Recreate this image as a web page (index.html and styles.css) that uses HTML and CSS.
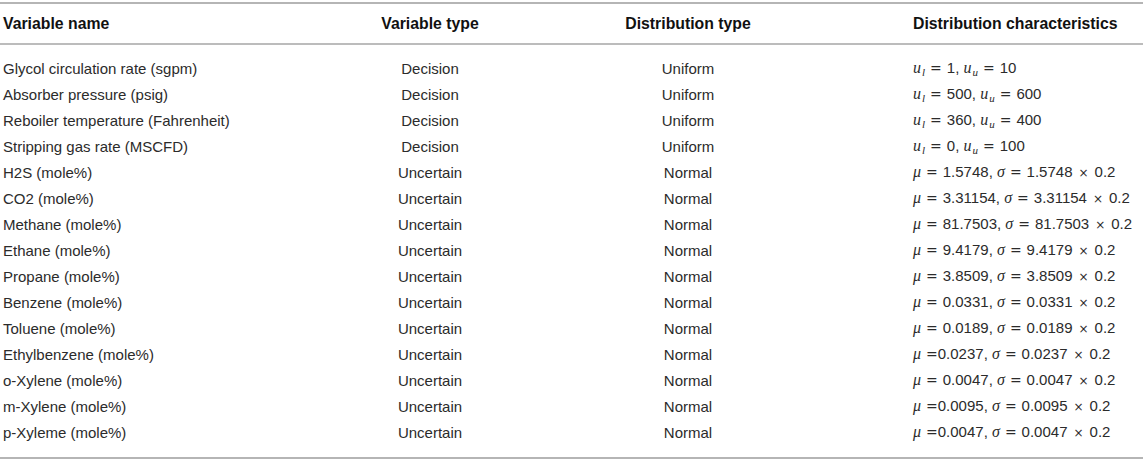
FILE: index.html
```html
<!DOCTYPE html>
<html>
<head>
<meta charset="utf-8">
<link rel="stylesheet" href="styles.css">
</head>
<body>
<table class="data">
  <colgroup>
    <col class="c1"><col class="c2"><col class="c3"><col class="c4">
  </colgroup>
  <thead>
    <tr>
      <th class="left">Variable name</th>
      <th class="mid">Variable type</th>
      <th class="mid">Distribution type</th>
      <th class="left last">Distribution characteristics</th>
    </tr>
  </thead>
  <tbody>
    <tr class="first"><td>Glycol circulation rate (sgpm)</td><td class="mid">Decision</td><td class="mid">Uniform</td><td class="last"><span class="mi">u</span><sub class="mi">l</sub><span class="eq">=</span>1, <span class="mi">u</span><sub class="mi">u</sub><span class="eq">=</span>10</td></tr>
    <tr><td>Absorber pressure (psig)</td><td class="mid">Decision</td><td class="mid">Uniform</td><td class="last"><span class="mi">u</span><sub class="mi">l</sub><span class="eq">=</span>500, <span class="mi">u</span><sub class="mi">u</sub><span class="eq">=</span>600</td></tr>
    <tr><td>Reboiler temperature (Fahrenheit)</td><td class="mid">Decision</td><td class="mid">Uniform</td><td class="last"><span class="mi">u</span><sub class="mi">l</sub><span class="eq">=</span>360, <span class="mi">u</span><sub class="mi">u</sub><span class="eq">=</span>400</td></tr>
    <tr><td>Stripping gas rate (MSCFD)</td><td class="mid">Decision</td><td class="mid">Uniform</td><td class="last"><span class="mi">u</span><sub class="mi">l</sub><span class="eq">=</span>0, <span class="mi">u</span><sub class="mi">u</sub><span class="eq">=</span>100</td></tr>
    <tr><td>H2S (mole%)</td><td class="mid">Uncertain</td><td class="mid">Normal</td><td class="last"><span class="mi">μ</span><span class="eq">=</span>1.5748, <span class="mi">σ</span><span class="eq">=</span>1.5748<span class="times">×</span>0.2</td></tr>
    <tr><td>CO2 (mole%)</td><td class="mid">Uncertain</td><td class="mid">Normal</td><td class="last"><span class="mi">μ</span><span class="eq">=</span>3.31154, <span class="mi">σ</span><span class="eq">=</span>3.31154<span class="times">×</span>0.2</td></tr>
    <tr><td>Methane (mole%)</td><td class="mid">Uncertain</td><td class="mid">Normal</td><td class="last"><span class="mi">μ</span><span class="eq">=</span>81.7503, <span class="mi">σ</span><span class="eq">=</span>81.7503<span class="times">×</span>0.2</td></tr>
    <tr><td>Ethane (mole%)</td><td class="mid">Uncertain</td><td class="mid">Normal</td><td class="last"><span class="mi">μ</span><span class="eq">=</span>9.4179, <span class="mi">σ</span><span class="eq">=</span>9.4179<span class="times">×</span>0.2</td></tr>
    <tr><td>Propane (mole%)</td><td class="mid">Uncertain</td><td class="mid">Normal</td><td class="last"><span class="mi">μ</span><span class="eq">=</span>3.8509, <span class="mi">σ</span><span class="eq">=</span>3.8509<span class="times">×</span>0.2</td></tr>
    <tr><td>Benzene (mole%)</td><td class="mid">Uncertain</td><td class="mid">Normal</td><td class="last"><span class="mi">μ</span><span class="eq">=</span>0.0331, <span class="mi">σ</span><span class="eq">=</span>0.0331<span class="times">×</span>0.2</td></tr>
    <tr><td>Toluene (mole%)</td><td class="mid">Uncertain</td><td class="mid">Normal</td><td class="last"><span class="mi">μ</span><span class="eq">=</span>0.0189, <span class="mi">σ</span><span class="eq">=</span>0.0189<span class="times">×</span>0.2</td></tr>
    <tr><td>Ethylbenzene (mole%)</td><td class="mid">Uncertain</td><td class="mid">Normal</td><td class="last"><span class="mi">μ</span><span class="eq tight">=</span>0.0237, <span class="mi">σ</span><span class="eq">=</span>0.0237<span class="times">×</span>0.2</td></tr>
    <tr><td>o-Xylene (mole%)</td><td class="mid">Uncertain</td><td class="mid">Normal</td><td class="last"><span class="mi">μ</span><span class="eq">=</span>0.0047, <span class="mi">σ</span><span class="eq">=</span>0.0047<span class="times">×</span>0.2</td></tr>
    <tr><td>m-Xylene (mole%)</td><td class="mid">Uncertain</td><td class="mid">Normal</td><td class="last"><span class="mi">μ</span><span class="eq tight">=</span>0.0095, <span class="mi">σ</span><span class="eq">=</span>0.0095<span class="times">×</span>0.2</td></tr>
    <tr class="final"><td>p-Xyleme (mole%)</td><td class="mid">Uncertain</td><td class="mid">Normal</td><td class="last"><span class="mi">μ</span><span class="eq tight">=</span>0.0047, <span class="mi">σ</span><span class="eq">=</span>0.0047<span class="times">×</span>0.2</td></tr>
  </tbody>
</table>
</body>
</html>
```

FILE: styles.css
```css
html, body {
  margin: 0;
  padding: 0;
  background: #ffffff;
}

body {
  font-family: "Liberation Sans", Arial, sans-serif;
  font-size: 15px;
  color: #2b2b2b;
}

.data {
  width: 1143px;
  margin-top: 2px;
  border-collapse: collapse;
  table-layout: fixed;
  border-top: 2px solid #b5b5b5;
  border-bottom: 2px solid #b5b5b5;
}

.c1 { width: 360px; }
.c2 { width: 140px; }
.c3 { width: 376px; }
.c4 { width: 267px; }

.data th {
  height: 39px;
  padding: 0 3px;
  font-size: 15.8px;
  font-weight: bold;
  color: #111111;
  border-bottom: 2px solid #bcbcbc;
  white-space: nowrap;
}

.data td {
  height: 26px;
  padding: 0 3px;
  white-space: nowrap;
  vertical-align: middle;
}

.left { text-align: left; }
.mid { text-align: center; }
.data .last { padding-left: 37px; text-align: left; }

.data tr.first td { padding-top: 10px; height: 26px; }
.data tr.final td { padding-bottom: 12px; height: 26px; }

.mi {
  font-family: "Liberation Serif", "Times New Roman", serif;
  font-style: italic;
  font-size: 16px;
}

sub.mi {
  font-size: 11px;
  vertical-align: -3px;
  line-height: 0;
  margin-left: 1px;
}

.eq {
  font-family: "DejaVu Sans", sans-serif;
  font-size: 14px;
  margin: 0 5px;
}

.eq.tight {
  margin-right: 0;
}

.times {
  font-family: "DejaVu Sans", sans-serif;
  font-size: 12px;
  margin: 0 6px;
}
```
